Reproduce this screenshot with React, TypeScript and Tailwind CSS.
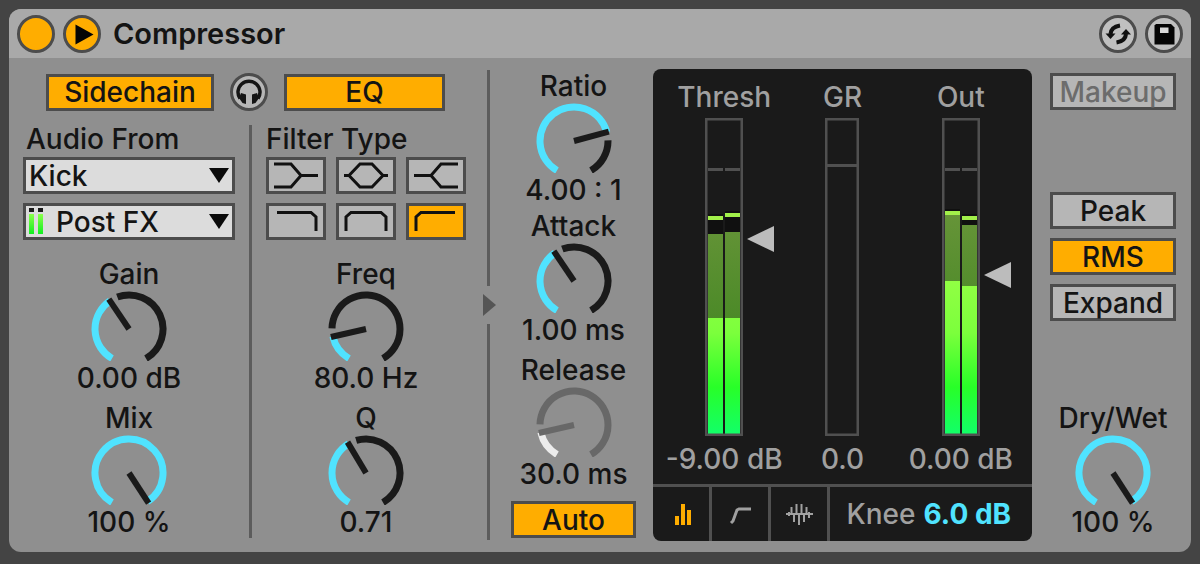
import { useId, useState } from 'react';
import type { ReactNode } from 'react';
import clsx from 'clsx';

const START = -147;
const SWEEP = 294;

// point on the dial, 0deg is straight up
function polar(angle: number, r: number) {
  const rad = (angle * Math.PI) / 180;
  return { x: 38 + r * Math.sin(rad), y: 38 - r * Math.cos(rad) };
}

function arc(from: number, to: number) {
  const a = polar(from, 34);
  const b = polar(to, 34);
  return `M${a.x} ${a.y} A34 34 0 ${to - from > 180 ? 1 : 0} 1 ${b.x} ${b.y}`;
}

function Knob({ label, value, text, disabled = false }: { label: string; value: number; text: string; disabled?: boolean }) {
  const id = useId();
  const angle = START + (SWEEP * value) / 100;
  const tip = polar(angle, 36);
  const dark = disabled ? '#686868' : '#1a1a1a';

  return (
    <div className="flex flex-col items-center gap-[3px] whitespace-nowrap">
      <label htmlFor={id} className="leading-7">{label}</label>
      <div className="relative">
        <svg width="76" height="70" viewBox="0 0 76 70" fill="none" strokeWidth="7" className="block">
          {angle + 14 < 147 && <path d={arc(angle + 14, 150)} stroke={dark} />}
          <path d={arc(-150, angle)} stroke={disabled ? '#ececec' : '#50e3ff'} />
          <path d={`M38 38 L${tip.x} ${tip.y}`} stroke={dark} strokeWidth="6" />
        </svg>
        <input
          id={id}
          type="range"
          min={0}
          max={100}
          step="any"
          defaultValue={value}
          aria-valuetext={text}
          className="absolute inset-0 h-full w-full cursor-pointer opacity-0"
        />
      </div>
      <output htmlFor={id} className="leading-7">{text}</output>
    </div>
  );
}

function Toggle({ children, on, onClick, className }: { children: ReactNode; on?: boolean; onClick?: () => void; className?: string }) {
  return (
    <button
      type="button"
      aria-pressed={!!on}
      onClick={onClick}
      className={clsx(
        'flex h-[37px] items-center justify-center border-[3px] border-[#4c4c4c] leading-7',
        on ? 'bg-[#ffad00]' : 'bg-[#b6b6b6]',
        className
      )}
    >
      {children}
    </button>
  );
}

function RoundButton({ label, children, className }: { label: string; children?: ReactNode; className?: string }) {
  return (
    <button
      type="button"
      aria-label={label}
      className={clsx('size-[38px] shrink-0 overflow-hidden rounded-full border-[3px] border-[#4c4c4c]', className)}
    >
      {children}
    </button>
  );
}

function Select({ label, options, meter = false }: { label: string; options: string[]; meter?: boolean }) {
  return (
    <div className="relative">
      <select
        aria-label={label}
        className={clsx(
          'block h-[37px] w-full appearance-none border-[3px] border-[#4c4c4c] bg-[#dcdcdc] leading-7 outline-none',
          meter ? 'pl-[30px]' : 'pl-[3px]'
        )}
      >
        {options.map((o) => (
          <option key={o}>{o}</option>
        ))}
      </select>
      {meter && (
        <svg width="16" height="28" viewBox="0 0 16 28" className="pointer-events-none absolute top-1 left-[5px]">
          <defs>
            <linearGradient id="mini" x1="0" y1="0" x2="0" y2="1">
              <stop offset="0" stopColor="#8aff4a" />
              <stop offset="1" stopColor="#10f020" />
            </linearGradient>
          </defs>
          <path d="M1 1h5v4h-5z M10 1h5v4h-5z" fill="#1a1a1a" />
          <path d="M1 7h5v20h-5z M10 7h5v20h-5z" fill="url(#mini)" />
        </svg>
      )}
      <svg width="20" height="15" viewBox="0 0 20 15" className="pointer-events-none absolute top-[11px] right-[6px]">
        <path d="M0 0H20L10 15Z" fill="#0a0a0a" />
      </svg>
    </div>
  );
}

const filters = [
  { name: 'Low shelf', d: 'M8 7H25L35 18.5H52M8 30H25L35 18.5' },
  { name: 'Bell', d: 'M8 18.5H13L24 7H36L47 18.5H52M13 18.5L24 30H36L47 18.5' },
  { name: 'High shelf', d: 'M8 18.5H25L35 7H52M25 18.5L35 30H52' },
  { name: 'Low pass', d: 'M11 9.5H45L50 14V28' },
  { name: 'Band pass', d: 'M10 28V14L15 9.5H45L50 14V28' },
  { name: 'High pass', d: 'M10 28V14L15 9.5H49' },
];

type Bar = { x: number; peak: number; hold: number; level: number };

function Meter({ bars = [], tick }: { bars?: Bar[]; tick: number }) {
  const width = bars.length ? 38 : 34;
  return (
    <svg width={width} height="318" viewBox={`0 0 ${width} 318`} className="block">
      <defs>
        <linearGradient id="level" gradientUnits="userSpaceOnUse" x1="0" y1="160" x2="0" y2="316">
          <stop offset="0" stopColor="#92ff44" />
          <stop offset="0.35" stopColor="#7cff3c" />
          <stop offset="0.7" stopColor="#28ff28" />
          <stop offset="1" stopColor="#12ff68" />
        </linearGradient>
        <linearGradient id="hold" gradientUnits="userSpaceOnUse" x1="0" y1="96" x2="0" y2="200">
          <stop offset="0" stopColor="#669438" />
          <stop offset="1" stopColor="#4c8a28" />
        </linearGradient>
      </defs>
      {bars.map((b) => (
        <g key={b.x}>
          <rect x={b.x} y={b.peak - 2} width="15" height={b.hold - b.peak + 2} fill="#101010" />
          <rect x={b.x} y={b.peak} width="15" height="4" fill="#a2f04a" />
          <rect x={b.x} y={b.hold} width="15" height={b.level - b.hold} fill="url(#hold)" />
          <rect x={b.x} y={b.level} width="15" height={316 - b.level} fill="url(#level)" />
          <rect x={b.x} y={tick} width="15" height="3" fill="#505050" />
        </g>
      ))}
      {!bars.length && <rect x="0" y={tick} width={width} height="3" fill="#505050" />}
      <rect x="1.25" y="1.25" width={width - 2.5} height="315.5" fill="none" stroke="#505050" strokeWidth="2.5" />
    </svg>
  );
}

function Channel({ title, value, children, slider }: { title: string; value: string; children: ReactNode; slider?: number }) {
  return (
    <div className="flex flex-col items-center whitespace-nowrap">
      <h2 className="leading-7">{title}</h2>
      <div className="relative mt-[7px]">
        {children}
        {slider !== undefined && (
          <label className="absolute left-full ml-[3px] -translate-y-1/2" style={{ top: slider }}>
            <svg width="30" height="28" viewBox="0 0 30 28" className="block">
              <path d="M1 14L28 1V27Z" fill="#bcbcbc" />
            </svg>
            <input type="range" aria-label={title} className="absolute inset-0 h-full w-full cursor-pointer opacity-0" />
          </label>
        )}
      </div>
      <p className="mt-[9px] leading-7">{value}</p>
    </div>
  );
}

const views = [
  {
    name: 'Level',
    icon: <path d="M3 13h4v9h-4z M9 1h4v21h-4z M15 7h4v15h-4z" fill="currentColor" />,
    width: 18,
  },
  {
    name: 'Transfer curve',
    icon: <path d="M2 20L4 18L8 7L10 6H22" fill="none" stroke="currentColor" strokeWidth="3" />,
    width: 22,
  },
  {
    name: 'Activity',
    icon: (
      <path
        d="M0 11H27M3 9V13M5.500 4V12M8 11V19M10.500 1V12M13 11V22M15.500 1V12M18 11V19M20.500 4V12M23 9V15"
        fill="none"
        stroke="currentColor"
        strokeWidth="2"
      />
    ),
    width: 27,
  },
];

function Display() {
  const [view, setView] = useState('Level');

  return (
    <section className="mt-[11px] mb-[11px] flex min-w-0 flex-1 flex-col overflow-hidden rounded-lg bg-[#1a1a1a] text-[#a0a0a0]">
      <div className="grid flex-1 grid-cols-3 px-3 pt-[14px]">
        <Channel title="Thresh" value="-9.00 dB" slider={121}>
          <Meter
            tick={50}
            bars={[
              { x: 3, peak: 98, hold: 116, level: 200 },
              { x: 20, peak: 95, hold: 114, level: 200 },
            ]}
          />
        </Channel>
        <Channel title="GR" value="0.0">
          <Meter tick={46} />
        </Channel>
        <Channel title="Out" value="0.00 dB" slider={157}>
          <Meter
            tick={50}
            bars={[
              { x: 3, peak: 93, hold: 97, level: 163 },
              { x: 20, peak: 98, hold: 107, level: 168 },
            ]}
          />
        </Channel>
      </div>
      <div className="flex h-[57px] border-t-[3px] border-[#505050]">
        {views.map((v) => (
          <button
            key={v.name}
            type="button"
            aria-label={v.name}
            onClick={() => setView(v.name)}
            className={clsx(
              'flex w-[59px] items-center justify-center border-r-[3px] border-[#505050]',
              view === v.name ? 'text-[#ffad00]' : 'text-[#a0a0a0]'
            )}
          >
            <svg width={v.width} height="23" viewBox={`0 0 ${v.width} 23`} className="overflow-visible">{v.icon}</svg>
          </button>
        ))}
        <label className="flex min-w-0 flex-1 items-center justify-center gap-2">
          Knee
          <input defaultValue="6.0 dB" className="w-[92px] bg-transparent font-bold text-[#50e3ff] outline-none" />
        </label>
      </div>
    </section>
  );
}

export default function App() {
  const [sidechain, setSidechain] = useState(true);
  const [eq, setEq] = useState(true);
  const [filter, setFilter] = useState('High pass');
  const [auto, setAuto] = useState(true);
  const [makeup, setMakeup] = useState(false);
  const [mode, setMode] = useState('RMS');

  return (
    <div className="min-h-screen bg-[#444444] px-[9px] pt-[9px] pb-3 font-['Inter',sans-serif] text-[28px] font-medium text-[#141414]">
      <main className="overflow-hidden rounded-xl bg-[#8f8f8f]">
        <header className="flex h-[49px] items-center gap-2 bg-[#a9a9a9] px-2">
          <RoundButton label="Device on" className="bg-[#ffad00]" />
          <RoundButton label="Preview" className="bg-[#ffad00]">
            <svg viewBox="3 3 32 32" className="block">
              <path d="M12.500 9.500L30.500 19.500L12.500 29.500Z" fill="#050505" />
            </svg>
          </RoundButton>
          <h1 className="ml-1 flex-1 text-[29px] font-semibold">Compressor</h1>
          <RoundButton label="Hot-swap preset" className="bg-[#c0c0c0]">
            <svg viewBox="3 3 32 32" className="block" fill="#111">
              <path d="M21 10.500Q12 12 11.500 19" fill="none" stroke="#111" strokeWidth="4" />
              <path d="M6.500 18.500H16.500L11.500 24Z" />
              <path d="M17.500 27.500Q26.500 26 27 19" fill="none" stroke="#111" strokeWidth="4" />
              <path d="M22 19.500H32L27 14Z" />
            </svg>
          </RoundButton>
          <RoundButton label="Save preset" className="bg-[#c0c0c0]">
            <svg viewBox="3 3 32 32" className="block">
              <path d="M9.500 10.500L11 9H26L29.500 12.500V29.500H9.500Z" fill="#050505" />
              <path d="M15 12.500H23.500V18H15Z" fill="#d8d8d8" />
            </svg>
          </RoundButton>
        </header>

        <div className="flex min-w-0">
          {/* Sidechain + EQ */}
          <section className="flex w-[457px] shrink-0 flex-col pt-[15px] pl-[14px]">
            <div className="flex items-center pl-[23px]">
              <Toggle on={sidechain} onClick={() => setSidechain(!sidechain)} className="w-[168px]">Sidechain</Toggle>
              <RoundButton label="Listen" className="mx-4 bg-[#b6b6b6]">
                <svg viewBox="3 3 32 32" className="block" fill="#151515">
                  <path d="M10 25.500A11 11 0 1 1 28 25.500" fill="none" stroke="#151515" strokeWidth="3.500" />
                  <path d="M11 20L16 21.500V31L12.500 30L9 25Z" />
                  <path d="M27 20L22 21.500V31L25.500 30L29 25Z" />
                </svg>
              </RoundButton>
              <Toggle on={eq} onClick={() => setEq(!eq)} className="w-[161px]">EQ</Toggle>
            </div>

            <div className="mt-[14px] flex flex-1 pb-[14px]">
              <div className="flex w-[212px] flex-col">
                <h2 className="mb-1 pl-[3px] leading-7">Audio From</h2>
                <div className="flex flex-col gap-[9px]">
                  <Select label="Audio source" options={['Kick', 'Snare', 'Bass']} />
                  <Select label="Tap point" options={['Post FX', 'Pre FX', 'Post Mixer']} meter />
                </div>
                <div className="mt-5 flex flex-col gap-3">
                  <Knob label="Gain" value={38.4} text="0.00 dB" />
                  <Knob label="Mix" value={100} text="100 %" />
                </div>
              </div>

              <div className="ml-[14px] w-[3px] bg-[#5c5c5c]" />

              <div className="ml-[14px] flex w-[200px] flex-col">
                <h2 className="mb-1 leading-7">Filter Type</h2>
                <div className="grid grid-cols-3 gap-x-[10px] gap-y-[9px]">
                  {filters.map((f) => (
                    <Toggle key={f.name} on={filter === f.name} onClick={() => setFilter(f.name)}>
                      <svg viewBox="3 3 54 31" className="block h-full w-full" fill="none" stroke="#111" strokeWidth="3">
                        <title>{f.name}</title>
                        <path d={f.d} />
                      </svg>
                    </Toggle>
                  ))}
                </div>
                <div className="mt-5 flex flex-col gap-3">
                  <Knob label="Freq" value={15} text="80.0 Hz" />
                  <Knob label="Q" value={39.5} text="0.71" />
                </div>
              </div>
            </div>
          </section>

          <div className="flex w-[45px] shrink-0 flex-col items-center gap-2 py-3">
            <div className="w-[3px] flex-1 bg-[#5c5c5c]" />
            <button type="button" aria-label="Fold sidechain section" className="pl-[2px]">
              <svg width="13" height="22" viewBox="0 0 13 22" className="block">
                <path d="M0 0L13 11L0 22Z" fill="#555" />
              </svg>
            </button>
            <div className="w-[3px] flex-1 bg-[#5c5c5c]" />
          </div>

          <section className="flex w-[125px] shrink-0 flex-col items-stretch pt-[14px] pb-[14px]">
            <Knob label="Ratio" value={75.5} text="4.00 : 1" />
            <div className="mt-2 mb-3">
              <Knob label="Attack" value={38.4} text="1.00 ms" />
            </div>
            <Knob label="Release" value={15} text="30.0 ms" disabled />
            <Toggle on={auto} onClick={() => setAuto(!auto)} className="mt-[13px]">Auto</Toggle>
          </section>

          <div className="flex min-w-0 flex-1 pl-[17px]">
            <Display />
          </div>

          <section className="flex w-[159px] shrink-0 flex-col pt-[15px] pr-[15px] pb-4 pl-[18px]">
            <Toggle on={makeup} onClick={() => setMakeup(!makeup)} className="text-[#6c6c6c]">Makeup</Toggle>
            <div className="mt-[82px] flex flex-col gap-[9px]">
              {['Peak', 'RMS', 'Expand'].map((m) => (
                <Toggle key={m} on={mode === m} onClick={() => setMode(m)}>{m}</Toggle>
              ))}
            </div>
            <div className="mt-auto">
              <Knob label="Dry/Wet" value={100} text="100 %" />
            </div>
          </section>
        </div>
      </main>
    </div>
  );
}
